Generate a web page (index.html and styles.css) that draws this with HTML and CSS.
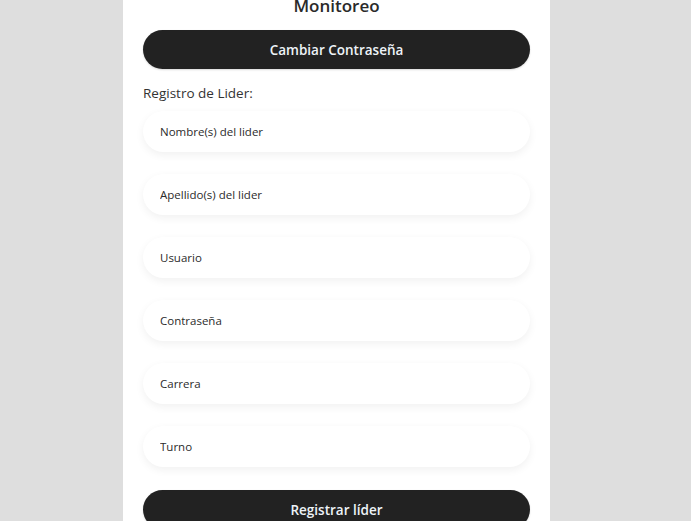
FILE: index.html
```html
<!DOCTYPE html>
<html lang="es">
<head>
<meta charset="utf-8">
<title>Monitoreo</title>
<link rel="stylesheet" href="styles.css">
</head>
<body>
<main class="card">
  <h1 class="title">Monitoreo</h1>
  <button class="btn">Cambiar Contraseña</button>
  <p class="label">Registro de Lider:</p>
  <form class="form">
    <input class="field" type="text" placeholder="Nombre(s) del lider">
    <input class="field" type="text" placeholder="Apellido(s) del lider">
    <input class="field" type="text" placeholder="Usuario">
    <input class="field" type="password" placeholder="Contraseña">
    <input class="field" type="text" placeholder="Carrera">
    <input class="field" type="text" placeholder="Turno">
    <button class="btn btn-submit" type="button">Registrar líder</button>
  </form>
</main>
</body>
</html>
```
FILE: styles.css
```css
html, body {
  margin: 0;
  padding: 0;
  background: #dedede;
  height: 100%;
  overflow: hidden;
}
body {
  font-family: "Open Sans", "Noto Sans", sans-serif;
  display: flex;
  justify-content: flex-start;
}
.card {
  margin-left: 123px;
  width: 387px;
  padding: 0 20px 40px;
  background: #fff;
  margin-top: -6px;
  display: flex;
  flex-direction: column;
  min-height: 600px;
}
.title {
  margin: 0;
  font-size: 17px;
  line-height: 24px;
  font-weight: 600;
  color: #2a2a2a;
  text-align: center;
  height: 24px;
}
.btn {
  margin-top: 12px;
  height: 39px;
  border: none;
  border-radius: 20px;
  background: #222222;
  color: #eef3f8;
  font-family: "Open Sans", "Noto Sans", sans-serif;
  font-size: 13.5px;
  font-weight: 600;
  width: 100%;
  box-shadow: 0 1px 2px rgba(0,0,0,0.15);
}
.label {
  margin: 15px 0 0;
  font-size: 13.5px;
  line-height: 18px;
  color: #333;
}
.form {
  display: flex;
  flex-direction: column;
  gap: 22px;
  margin-top: 9px;
}
.field {
  height: 41px;
  box-sizing: border-box;
  border: none;
  border-radius: 21px;
  background: #fff;
  padding: 0 17px;
  font-family: "Open Sans", "Noto Sans", sans-serif;
  font-size: 11.5px;
  color: #333;
  box-shadow: 0 3px 8px rgba(0,0,0,0.06);
  outline: none;
}
.field::placeholder {
  color: #2b2b2b;
  opacity: 1;
}
.btn-submit {
  margin-top: 1px;
}
```
